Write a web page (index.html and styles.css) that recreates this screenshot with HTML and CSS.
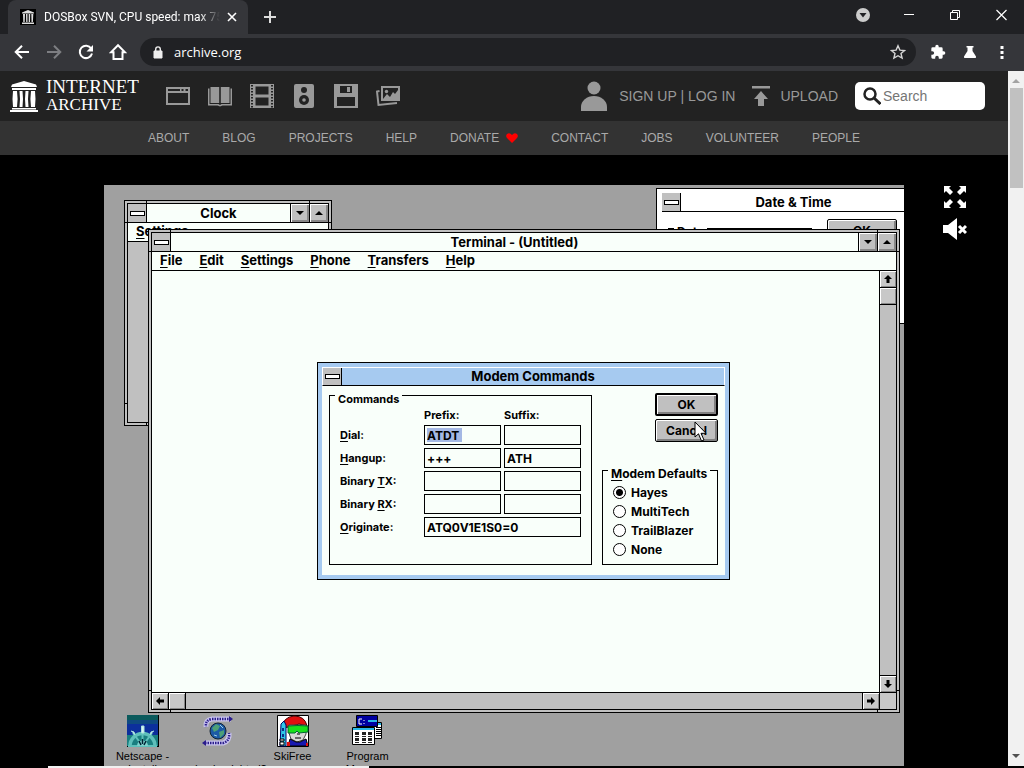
FILE: index.html
```
<!DOCTYPE html>
<html lang="en">

<head>
  <meta charset="utf-8">
  <title>DOSBox SVN, CPU speed: max 75% cycles</title>
  <link rel="stylesheet" href="styles.css">
</head>

<body>
  <div class="tabstrip">
    <div class="tab">
      <svg class="favicon" width="16" height="16" viewBox="0 0 16 16"><path fill="#000" d="M0 0h16v16H0z"/><path fill="#ddd" d="M8 1l6 2.500v1H2v-1zM3 5h2l-.3 8H3.300zM6 5h1.500v8H6.200zM8.700 5h1.500l-.2 8H8.700zM11.300 5h2l-.4 8h-1.400zM2 13.500h12V15H2z"/></svg>
      <span class="tab-title">DOSBox SVN, CPU speed: max 75%</span>
      <button class="tab-close" aria-label="Close tab"><svg width="10" height="10" viewBox="0 0 10 10"><path d="M1 1l8 8M9 1L1 9" stroke="#fff" stroke-width="1.600"/></svg></button>
    </div>
    <button class="new-tab" aria-label="New tab"><svg width="14" height="14" viewBox="0 0 14 14"><path d="M7 1v12M1 7h12" stroke="#ddd" stroke-width="2"/></svg></button>
    <div class="window-buttons">
      <button aria-label="Tab search"><svg width="14" height="14" viewBox="0 0 14 14"><circle cx="7" cy="7" r="7" fill="#ccc"/><path d="M3.500 5h7L7 9.500z" fill="#202124"/></svg></button>
      <button aria-label="Minimize"><svg width="10" height="14" viewBox="0 0 10 14"><path d="M0 6.500h10" stroke="#fff"/></svg></button>
      <button aria-label="Restore"><svg width="10" height="14" viewBox="0 0 10 14"><path d="M.5 4.500h7v7h-7zM2.500 4.500v-2h7v7h-2" stroke="#fff" fill="none"/></svg></button>
      <button aria-label="Close"><svg width="11" height="14" viewBox="0 0 11 14"><path d="M.5 2l10 10M10.500 2l-10 10" stroke="#fff" stroke-width="1.200"/></svg></button>
    </div>
  </div>

  <div class="toolbar">
    <button aria-label="Back"><svg width="16" height="16" viewBox="0 0 16 16"><path d="M15 8H2M8 1.700L1.700 8 8 14.300" stroke="#fff" stroke-width="2" fill="none"/></svg></button>
    <button aria-label="Forward"><svg width="16" height="16" viewBox="0 0 16 16"><path d="M1 8h13M8 1.700L14.300 8 8 14.300" stroke="#7d7e82" stroke-width="2" fill="none"/></svg></button>
    <button aria-label="Reload"><svg width="16" height="16" viewBox="0 0 16 16"><path d="M13.200 4.500A6.200 6.200 0 1 0 14 9.500" stroke="#fff" stroke-width="2" fill="none"/><path d="M15 1v6.500H8.500z" fill="#fff"/></svg></button>
    <button aria-label="Home"><svg width="18" height="18" viewBox="0 0 18 18"><path d="M9 2.200L2 9.300h2.500V16h9V9.300H16z" stroke="#fff" stroke-width="2" fill="none"/></svg></button>
    <div class="omnibox">
      <svg width="10" height="13" viewBox="0 0 10 13"><path d="M1 5h8v7H1z" fill="#eee" stroke="#eee"/><path d="M2.700 5V3.200a2.300 2.300 0 0 1 4.600 0V5" stroke="#eee" stroke-width="1.400" fill="none"/></svg>
      <input type="text" value="archive.org" aria-label="Address">
      <svg width="16" height="16" viewBox="0 0 16 16"><path d="M8 1.800l1.900 4.300 4.600.4L11 9.500l1.100 4.600L8 11.700l-4.100 2.400L5 9.500 1.500 6.500l4.600-.4z" stroke="#d5d5d5" stroke-width="1.400" fill="none"/></svg>
    </div>
    <button aria-label="Extensions"><svg width="16" height="16" viewBox="0 0 24 24"><path fill="#fff" d="M20.500 11H19V7a2 2 0 0 0-2-2h-4V3.500a2.500 2.500 0 0 0-5 0V5H4a2 2 0 0 0-2 2v3.800h1.500a2.700 2.700 0 0 1 0 5.400H2V20a2 2 0 0 0 2 2h3.800v-1.500a2.700 2.700 0 0 1 5.400 0V22H17a2 2 0 0 0 2-2v-4h1.500a2.500 2.500 0 0 0 0-5z"/></svg></button>
    <button aria-label="Experiments"><svg width="14" height="14" viewBox="0 0 14 14"><path fill="#fff" d="M3.500 1h7v1.500H9.500V6L13 11.500Q13.500 13 12 13H2Q.5 13 1 11.500L4.500 6V2.500h-1z"/></svg></button>
    <button aria-label="Menu"><svg width="4" height="14" viewBox="0 0 4 14"><path fill="#fff" d="M.5 1h3v3h-3zM.5 6h3v3h-3zM.5 11h3v3h-3z"/></svg></button>
  </div>

  <div class="viewport">
    <div class="page">
      <header class="topbar">
        <a href="#" class="logo">
          <svg width="28" height="32" viewBox="0 0 28 32"><path fill="#fff" d="M14 1l12 3.500 1 2.500H1l1-2.500zM2 8h24v2H2zM3 11h4l.6 8-.6 8H3l-.5-8zM9.500 11h3l.5 8-.5 8h-3l.5-8zM15.500 11h3l-.5 8 .5 8h-3l-.5-8zM21 11h4l.5 8-.5 8h-4l-.6-8zM2 28h24v1.500H2zM0 30h28v2H0z"/></svg>
          <span class="wordmark"><span>INTERNET</span><span class="second">ARCHIVE</span></span>
        </a>
        <nav class="media">
          <a href="#" aria-label="Web"><svg width="24" height="24" viewBox="0 0 24 24"><path fill="#999" fill-rule="evenodd" d="M0 3h24v18H0zM2 9v10h20V9zM2 5v2h12V5zM15.500 5v2h2V5zM19.500 5v2H22V5z"/></svg></a>
          <a href="#" aria-label="Texts"><svg width="24" height="24" viewBox="0 0 24 24"><path fill="#999" d="M2.500 3h8.700v16H2.500zM12.800 3h8.700v16h-8.700zM0 4.500h1.500V20h9l1.500 1 1.500-1h9V4.500H24v17h-9.500L12 22.500l-2.500-1H0z"/></svg></a>
          <a href="#" aria-label="Video"><svg width="24" height="24" viewBox="0 0 24 24"><path fill="#999" fill-rule="evenodd" d="M0 0h24v24H0zM5.500 2.500v8h13v-8zM5.500 13.500v8h13v-8z"/><path stroke="#222" stroke-width="2" stroke-dasharray="1.600 1.400" d="M2 1v23M22 1v23"/></svg></a>
          <a href="#" aria-label="Audio"><svg width="24" height="24" viewBox="0 0 24 24"><rect x="2" width="20" height="24" rx="2" fill="#999"/><circle cx="12" cy="6" r="3" fill="#222"/><circle cx="12" cy="16" r="5" fill="#222"/><circle cx="12" cy="16" r="1.800" fill="#999"/></svg></a>
          <a href="#" aria-label="Software"><svg width="24" height="24" viewBox="0 0 24 24"><path fill="#999" fill-rule="evenodd" d="M0 0h24v24H0zM6 2v7h12V2zM3 13v9h18v-9z"/><path fill="#999" d="M13 3h3v5h-3z"/></svg></a>
          <a href="#" aria-label="Images"><svg width="24" height="24" viewBox="0 0 24 24"><path fill="#999" fill-rule="evenodd" d="M5 2h19v15H5zM7 4v11l4-5 3 3 3-5 2 2 3-4V4z"/><circle cx="10.500" cy="7.500" r="1.700" fill="#999"/><path d="M3.500 7L1 7.500 2.500 21 21 19" stroke="#999" stroke-width="2" fill="none"/></svg></a>
        </nav>
        <div class="account">
          <svg width="26" height="32" viewBox="0 0 26 32"><circle cx="13" cy="8" r="6.500" fill="#999"/><path d="M0 31V27a13 11 0 0 1 26 0v4z" fill="#999"/></svg>
          <span><a href="#">SIGN UP</a> | <a href="#">LOG IN</a></span>
        </div>
        <a href="#" class="upload">
          <svg width="18" height="20" viewBox="0 0 18 20"><path fill="#999" d="M0 0h18v2.500H0zM9 5l7 8h-4v7H6v-7H2z"/></svg>
          UPLOAD
        </a>
        <label class="search">
          <svg width="18" height="18" viewBox="0 0 18 18"><circle cx="7" cy="7" r="5.500" stroke="#222" stroke-width="2.500" fill="none"/><path d="M11 11l6.500 6" stroke="#222" stroke-width="3"/></svg>
          <input type="search" placeholder="Search" aria-label="Search">
        </label>
      </header>

      <nav class="subnav">
        <a href="#">ABOUT</a>
        <a href="#">BLOG</a>
        <a href="#">PROJECTS</a>
        <a href="#">HELP</a>
        <a href="#">DONATE <svg width="12" height="10" viewBox="0 0 12 10"><path fill="#f00" d="M6 10L1 5Q-.5 3 .8 1.200 3.500-1 6 2q2.500-3 5.200-.8Q12.500 3 11 5z"/></svg></a>
        <a href="#">CONTACT</a>
        <a href="#">JOBS</a>
        <a href="#">VOLUNTEER</a>
        <a href="#">PEOPLE</a>
      </nav>

      <main class="stage">
        <div class="desktop">

          <section class="window clock">
            <div class="window-inner">
              <div class="titlebar">
                <button class="sysmenu" aria-label="Control menu"></button>
                <h2>Clock</h2>
                <button class="sizer" aria-label="Minimize"><svg width="8" height="4" viewBox="0 0 8 4"><path d="M0 0h8L4 4z"/></svg></button>
                <button class="sizer" aria-label="Maximize"><svg width="8" height="4" viewBox="0 0 8 4"><path d="M0 4h8L4 0z"/></svg></button>
              </div>
              <div class="menubar"><a href="#"><u>S</u>ettings</a></div>
              <div class="clock-face"></div>
            </div>
          </section>

          <section class="datetime">
            <div class="titlebar">
              <button class="sysmenu" aria-label="Control menu"></button>
              <h2>Date &amp; Time</h2>
            </div>
            <div class="datetime-body">
              <fieldset><legend>Date</legend></fieldset>
              <button class="push">OK</button>
            </div>
          </section>

          <section class="window terminal">
            <div class="window-inner">
              <div class="titlebar">
                <button class="sysmenu" aria-label="Control menu"></button>
                <h2>Terminal - (Untitled)</h2>
                <button class="sizer" aria-label="Minimize"><svg width="8" height="4" viewBox="0 0 8 4"><path d="M0 0h8L4 4z"/></svg></button>
                <button class="sizer" aria-label="Maximize"><svg width="8" height="4" viewBox="0 0 8 4"><path d="M0 4h8L4 0z"/></svg></button>
              </div>
              <div class="menubar">
                <a href="#"><u>F</u>ile</a>
                <a href="#"><u>E</u>dit</a>
                <a href="#"><u>S</u>ettings</a>
                <a href="#"><u>P</u>hone</a>
                <a href="#"><u>T</u>ransfers</a>
                <a href="#"><u>H</u>elp</a>
              </div>
              <div class="terminal-body">
                <div class="screen"></div>
                <div class="vscroll">
                  <button aria-label="Scroll up"><svg width="8" height="8" viewBox="0 0 8 8"><path d="M4 0l4 4H5.500v4h-3V4H0z"/></svg></button>
                  <div class="knob"></div>
                  <button class="last" aria-label="Scroll down"><svg width="8" height="8" viewBox="0 0 8 8"><path d="M4 8L0 4h2.500V0h3v4H8z"/></svg></button>
                </div>
                <div class="hscroll">
                  <button aria-label="Scroll left"><svg width="8" height="8" viewBox="0 0 8 8"><path d="M0 4l4-4v2.500h4v3H4V8z"/></svg></button>
                  <div class="knob"></div>
                  <button class="last" aria-label="Scroll right"><svg width="8" height="8" viewBox="0 0 8 8"><path d="M8 4L4 8V5.500H0v-3h4V0z"/></svg></button>
                </div>
                <div class="corner"></div>
              </div>
            </div>
          </section>

          <form class="dialog">
            <div class="titlebar">
              <button type="button" class="sysmenu" aria-label="Control menu"></button>
              <h2>Modem Commands</h2>
            </div>
            <div class="dialog-body">
              <fieldset class="commands">
                <legend>Commands</legend>
                <div class="fields">
                  <span></span><span>Prefix:</span><span>Suffix:</span>
                  <label for="dial"><u>D</u>ial:</label>
                  <input type="text" id="dial" class="selected" value="ATDT"><input type="text" aria-label="Dial suffix">
                  <label for="hangup"><u>H</u>angup:</label>
                  <input type="text" id="hangup" value="+++"><input type="text" aria-label="Hangup suffix" value="ATH">
                  <label for="tx">Binary <u>T</u>X:</label>
                  <input type="text" id="tx"><input type="text" aria-label="Binary TX suffix">
                  <label for="rx">Binary <u>R</u>X:</label>
                  <input type="text" id="rx"><input type="text" aria-label="Binary RX suffix">
                  <label for="originate"><u>O</u>riginate:</label>
                  <input type="text" id="originate" class="wide" value="ATQ0V1E1S0=0">
                </div>
              </fieldset>
              <div class="side">
                <button type="button" class="push default">OK</button>
                <button type="button" class="push">Cancel</button>
                <fieldset class="defaults">
                  <legend><u>M</u>odem Defaults</legend>
                  <label><input type="radio" name="modem" checked>Hayes</label>
                  <label><input type="radio" name="modem">MultiTech</label>
                  <label><input type="radio" name="modem">TrailBlazer</label>
                  <label><input type="radio" name="modem">None</label>
                </fieldset>
              </div>
            </div>
          </form>

          <svg class="pointer" width="13" height="21" viewBox="0 0 13 21"><path d="M1 1v15l3.500-3.200L7.500 20l2.500-1-3-6.700H12z" fill="#fff" stroke="#000"/></svg>

          <div class="icons">
            <figure>
              <svg width="32" height="32" viewBox="0 0 32 32"><path fill="#000" d="M0 0h32v32H0z"/><path fill="#0b5a5c" d="M0 0h31v8H0z"/><path fill="#0c2f9c" d="M0 7h31v13H0z"/><path fill="#0f4a80" d="M0 5h31v4H0z"/><path fill="#1a7f80" d="M0 20h31v11H0z"/><g stroke="#5fc0bb" stroke-width="3" fill="none"><path d="M3 31a12 12 0 0 1 25 0" stroke-width="3.500"/><path d="M15.500 31V12M15.500 31L6 18M15.500 31L25 18M15.500 31H1M15.500 31H30" stroke-width="2"/></g><path d="M14.500 11h2.500v7h-2.500zM4 16l3 1 1 3M27 16l-3 1-1 3" fill="#d9f4f2" stroke="#a9e2de"/><path d="M10 31a5.500 5.500 0 0 1 11 0z" fill="#7fd2cc"/><path d="M12 26l2 4M19 26l-2 4M15.500 24v5" stroke="#023" stroke-width="1.500"/></svg>
              <figcaption>Netscape -<br>Install</figcaption>
            </figure>
            <figure>
              <svg width="32" height="32" viewBox="0 0 32 32"><g fill="none" stroke="#c9c4ee" stroke-width="5"><path d="M29 4H10Q3 5 4 12M3 28h18q7-2 6-10"/></g><g fill="none" stroke="#2a1c8c" stroke-width="2.500" stroke-dasharray="1.500 1"><path d="M29 4H10Q3 5 4 12M3 28h18q7-2 6-10"/></g><path fill="#2a1c8c" d="M27 1l4 3-4 3zM4 25l-4 3 4 3z"/><circle cx="16" cy="16" r="8" fill="#1d5aa5" stroke="#123"/><path d="M10 13l4-4 4 2-2 4-4 2zM17 17l5-2v4l-4 4z" fill="#4da077"/><path d="M12 20l3 1M18 10l3 3" stroke="#9fd0e8"/></svg>
              <figcaption><br>wmodembook.html?</figcaption>
            </figure>
            <figure>
              <svg width="32" height="32" viewBox="0 0 32 32"><path fill="#fff" stroke="#000" d="M.5.500h31v31H.5z"/><path fill="#e01010" stroke="#400" d="M5 13Q6 2 17 1q11 0 13 10l-8-2-10 3z"/><path fill="#d8d8d8" stroke="#444" d="M12 10h17v9l-3 6-6 2-6-3-2-6z"/><path fill="#19e01c" stroke="#063" d="M11 11q10-1 20 0v6l-9 1-2-2-2 2h-7z"/><path fill="#30c8e8" stroke="#006" d="M4 9l3-3 2 4v21H3z"/><path d="M6 13v3M6 19v3" stroke="#006" stroke-width="1.500"/><path fill="#1818b0" stroke="#000" d="M11 31l2-7 6 3h4l6-3 2 7z"/><path d="M20 19h3M18 23h6" stroke="#444" stroke-width="1.500"/><path fill="#e01010" d="M10 27h3v4h-3zM29 28h2v3h-2z"/><path fill="#fff" stroke="#000" d="M3 24h4v2H3zM3 27h4v3H3z"/></svg>
              <figcaption>SkiFree</figcaption>
            </figure>
            <figure>
              <svg width="32" height="32" viewBox="0 0 32 32"><path fill="#fff" stroke="#000" d="M15.500 7.500h14v16h-14z"/><path fill="#28b8e8" d="M16 8h13v2H16z"/><path d="M24 12.500h5M24 14.500h5M24 16.500h5M24 18.500h5M24 20.500h5" stroke="#000"/><path fill="#0000a0" stroke="#000" d="M4.500.500h21v11h-21z"/><path fill="#28b8e8" d="M16 5h9v2h-9z"/><path d="M10 4H7v5h3M12 5v1M12 8v1" stroke="#fff" fill="none"/><path fill="#fff" stroke="#000" d="M.5 12.500h22v17H.5z"/><path fill="#28b8e8" d="M1 13h21v2H1z"/><path d="M3 18.500h4M10 18.500h4M16 18.500h4M3 24.500h4M10 24.500h4M16 24.500h4" stroke="#222" stroke-width="3"/><path d="M3 21.500h4M10 21.500h4M16 21.500h4M3 27.500h4M10 27.500h4M16 27.500h4" stroke="#222"/></svg>
              <figcaption>Program<br>Manager</figcaption>
            </figure>
          </div>
        </div>

        <div class="player-tools">
          <button aria-label="Fullscreen"><svg width="24" height="24" viewBox="0 0 24 24"><path fill="#fff" d="M1 1h7L6 3l4 4-3 3-4-4-2 2zM23 1h-7l2 2-4 4 3 3 4-4 2 2zM1 23h7l-2-2 4-4-3-3-4 4-2-2zM23 23h-7l2-2-4-4 3-3 4 4 2-2z"/></svg></button>
          <button aria-label="Mute"><svg width="24" height="24" viewBox="0 0 24 24"><path fill="#fff" d="M0 8h5l9-7v22l-9-7H0z"/><path d="M16 9l7 7M23 9l-7 7" stroke="#fff" stroke-width="3"/></svg></button>
        </div>
      </main>
    </div>

    <div class="scrollbar">
      <svg width="8" height="4" viewBox="0 0 8 4"><path fill="#a3a3a3" d="M0 4h8L4 0z"/></svg>
      <div class="thumb"></div>
      <svg width="8" height="4" viewBox="0 0 8 4"><path fill="#505050" d="M0 0h8L4 4z"/></svg>
    </div>
  </div>
  <div class="bottom-edge"><div></div></div>
</body>

</html>
```
FILE: styles.css
```
* {
  box-sizing: border-box;
}

body {
  margin: 0;
  height: 100vh;
  display: flex;
  flex-direction: column;
  overflow: hidden;
  background: #000;
  font-family: "Liberation Sans", Arial, sans-serif;
}

button {
  padding: 0;
  border: 0;
  background: none;
  font: inherit;
  display: flex;
  align-items: center;
  justify-content: center;
}

svg {
  flex: none;
  display: block;
}

a {
  color: inherit;
  text-decoration: none;
}

/* browser */
.tabstrip {
  height: 34px;
  flex: none;
  display: flex;
  padding-left: 8px;
  background: #202124;
}

.tab {
  width: 240px;
  display: flex;
  align-items: center;
  padding: 0 10px 0 12px;
  background: #35363a;
  border-radius: 8px 8px 0 0;
}

.tab-title {
  flex: 1;
  margin-left: 8px;
  overflow: hidden;
  white-space: nowrap;
  color: #fff;
  font-family: Roboto, sans-serif;
  font-size: 12px;
  -webkit-mask-image: linear-gradient(90deg, #000 88%, transparent);
  mask-image: linear-gradient(90deg, #000 88%, transparent);
}

.tab-close {
  margin-left: 6px;
  width: 12px;
}

.new-tab {
  width: 44px;
}

.window-buttons {
  display: flex;
  margin-left: auto;
  height: 30px;
}

.window-buttons button {
  width: 46px;
}

.toolbar {
  height: 37px;
  flex: none;
  display: flex;
  align-items: center;
  padding: 0 6px 1px;
  background: #35363a;
}

.toolbar button {
  width: 32px;
  height: 28px;
}

.omnibox {
  flex: 1;
  height: 28px;
  margin: 0 6px;
  padding: 0 10px 0 13px;
  display: flex;
  align-items: center;
  gap: 11px;
  border-radius: 14px;
  background: #202124;
}

.omnibox input {
  flex: 1;
  padding: 0;
  border: 0;
  outline: 0;
  background: none;
  color: #fff;
  font-family: "Open Sans", sans-serif;
  font-size: 13px;
}

.viewport {
  flex: 1;
  min-height: 0;
  display: flex;
}

.page {
  flex: 1;
  min-width: 0;
  display: flex;
  flex-direction: column;
}

.scrollbar {
  width: 16px;
  padding: 8px 0;
  display: flex;
  flex-direction: column;
  align-items: center;
  background: #f1f1f1;
}

.thumb {
  width: 13px;
  height: 100px;
  margin: 5px 0 auto;
  background: #c1c1c1;
}

.bottom-edge {
  height: 2px;
  flex: none;
  padding: 0 64% 0 48px;
}

.bottom-edge div {
  height: 2px;
  background: #f1f1f1;
}

/* archive.org header */
.topbar {
  height: 50px;
  flex: none;
  display: flex;
  align-items: center;
  padding: 0 23px 0 10px;
  background: #222;
  color: #999;
  font-size: 14px;
}

.logo {
  display: flex;
  align-items: center;
  gap: 8px;
  color: #fff;
  font-family: "Liberation Serif", serif;
}

.wordmark {
  display: flex;
  flex-direction: column;
  font-size: 19px;
  line-height: 18px;
}

.wordmark .second {
  font-size: 17px;
}

.media {
  display: flex;
  gap: 18px;
  margin-left: 27px;
}

.account {
  display: flex;
  align-items: center;
  gap: 12px;
  margin-left: auto;
}

.upload {
  display: flex;
  align-items: center;
  gap: 10px;
  margin: 0 17px;
}

.search {
  width: 130px;
  height: 28px;
  display: flex;
  align-items: center;
  gap: 2px;
  padding-left: 8px;
  border-radius: 5px;
  background: #fff;
}

.search input {
  flex: 1;
  min-width: 0;
  padding: 0;
  border: 0;
  outline: 0;
  background: none;
  font: 14px "Liberation Sans", Arial, sans-serif;
}

.subnav {
  height: 34px;
  flex: none;
  display: flex;
  align-items: center;
  justify-content: center;
  gap: 33px;
  background: #333;
  color: #aaa;
  font-size: 12px;
}

.subnav a {
  display: flex;
  align-items: center;
  gap: 7px;
}

/* emulator */
.stage {
  flex: 1;
  min-height: 0;
  display: grid;
  grid-template-columns: 1fr 800px 1fr;
  padding-top: 30px;
  background: #000;
}

.player-tools {
  grid-column: 3;
  padding-left: 39px;
  display: flex;
  flex-direction: column;
  align-items: flex-start;
  gap: 8px;
}

.desktop {
  grid-column: 2;
  position: relative;
  overflow: hidden;
  background: #a0a0a0;
  font-family: Inter, sans-serif;
  font-size: 12px;
  font-weight: 700;
  color: #000;
}

.desktop u {
  text-underline-offset: 2px;
}

.window {
  position: absolute;
  padding: 2px;
  border: 1px solid #000;
  background:
    linear-gradient(#000, #000) left 21px top 0 / 1px 100% no-repeat,
    linear-gradient(#000, #000) right 21px top 0 / 1px 100% no-repeat,
    linear-gradient(#000, #000) left 0 top 21px / 100% 1px no-repeat,
    linear-gradient(#000, #000) left 0 bottom 21px / 100% 1px no-repeat,
    #c0c0c0;
}

.window-inner {
  height: 100%;
  display: flex;
  flex-direction: column;
  border: 1px solid #000;
  background: #f9fffa;
}

.clock {
  left: 20px;
  top: 15px;
  width: 208px;
  height: 226px;
}

.clock-face {
  flex: 1;
  background: #c0c0c0;
}

.terminal {
  left: 44px;
  top: 44px;
  width: 752px;
  height: 484px;
}

.titlebar {
  flex: none;
  height: 19px;
  display: flex;
  border-bottom: 1px solid #000;
}

.titlebar h2 {
  flex: 1;
  margin: 0;
  text-align: center;
  font-size: 13px;
  line-height: 18px;
}

.sysmenu {
  width: 19px;
  border-right: 1px solid #000;
  background: #c0c0c0;
}

.sysmenu::before {
  content: "";
  width: 13px;
  height: 3px;
  border: 1px solid #000;
  background: #fff;
}

.sizer {
  width: 19px;
  border-left: 1px solid #000;
  background: #c0c0c0;
  box-shadow: inset 1px 1px #fff, inset -2px -2px #888;
}

.menubar {
  flex: none;
  height: 19px;
  display: flex;
  gap: 17px;
  padding-left: 8px;
  border-bottom: 1px solid #000;
  font-size: 13px;
  line-height: 16px;
}

.terminal-body {
  flex: 1;
  display: grid;
  grid-template: 1fr 17px / 1fr 17px;
}

.vscroll,
.hscroll {
  display: flex;
  background: #c0c0c0;
}

.vscroll {
  flex-direction: column;
  border-left: 1px solid #000;
}

.hscroll {
  border-top: 1px solid #000;
}

.vscroll > *,
.hscroll > * {
  width: 16px;
  height: 16px;
  background: #c8c8c8;
  box-shadow: inset 1px 1px #fff, inset -1px -1px #888;
}

.vscroll > * {
  height: 17px;
  border-bottom: 1px solid #000;
}

.hscroll > * {
  width: 17px;
  border-right: 1px solid #000;
}

.vscroll .last {
  margin-top: auto;
  border: 0;
  border-top: 1px solid #000;
}

.hscroll .last {
  margin-left: auto;
  border: 0;
  border-left: 1px solid #000;
}

.corner {
  border: 1px solid #000;
  border-width: 1px 0 0 1px;
  background: #c8c8c8;
}

.datetime {
  position: absolute;
  left: 552px;
  top: 3px;
  width: 256px;
  height: 136px;
  padding: 4px 5px;
  border: 1px solid #000;
  background: #fff;
}

.datetime-body {
  display: flex;
  gap: 15px;
  padding: 7px 6px;
}

.datetime fieldset {
  width: 144px;
  height: 60px;
}

.datetime .push {
  width: 70px;
}

fieldset {
  margin: 0;
  min-width: 0;
  padding: 0 10px;
  border: 1px solid #000;
}

legend {
  margin-left: -5px;
  padding: 8px 3px 0;
  line-height: 10px;
  white-space: nowrap;
}

.push {
  width: 63px;
  height: 23px;
  border: 1px solid #000;
  border-radius: 2px;
  background: #c0c0c0;
  box-shadow: inset 1px 1px #fff, inset -2px -2px #808080;
}

.push.default {
  border-width: 2px;
}

.dialog {
  position: absolute;
  left: 213px;
  top: 177px;
  width: 413px;
  height: 218px;
  display: flex;
  flex-direction: column;
  padding: 4px;
  border: 1px solid #000;
  background: #a6caf0;
}

.dialog .titlebar {
  border-left: 1px solid #fff;
  border-top: 1px solid #fff;
  border-right: 1px solid #fff;
}

.dialog .titlebar h2 {
  line-height: 17px;
}

.dialog-body {
  flex: 1;
  display: flex;
  gap: 10px;
  padding: 0 7px 10px;
  background: #f9fffa;
}

.commands {
  flex: 1;
  font-size: 11px;
}

.fields {
  display: grid;
  grid-template-columns: 81px 77px 77px;
  grid-auto-rows: 20px;
  grid-template-rows: 15px;
  gap: 3px;
  padding-top: 3px;
  align-items: center;
}

.fields input {
  width: 100%;
  height: 20px;
  padding: 0 2px;
  border: 1px solid #000;
  border-radius: 0;
  outline: 0;
  background: #f9fffa;
  font: 700 12px Inter, sans-serif;
  color: #000;
}

.fields .wide {
  grid-column: span 2;
}

.fields .selected {
  background: linear-gradient(#a4b8e4, #a4b8e4) 2px 2px / 35px 14px no-repeat #f9fffa;
}

.side {
  width: 116px;
  display: flex;
  flex-direction: column;
  align-items: flex-end;
  gap: 3px;
  padding-top: 7px;
}

.defaults {
  width: 100%;
  height: 104px;
  margin-top: auto;
}

.defaults legend + label {
  margin-top: 4px;
}

.defaults label {
  display: flex;
  align-items: center;
  gap: 5px;
  height: 19px;
}

.defaults input {
  appearance: none;
  width: 13px;
  height: 13px;
  margin: 0;
  border: 1px solid #000;
  border-radius: 50%;
  background: #fff;
}

.defaults input:checked {
  background: radial-gradient(#000 3px, #fff 4px);
}

.pointer {
  position: absolute;
  left: 590px;
  top: 236px;
}

.icons {
  position: absolute;
  left: 1px;
  top: 530px;
  display: flex;
  font-family: "Liberation Sans", Arial, sans-serif;
  font-size: 11px;
  font-weight: 400;
  line-height: 13px;
}

.icons figure {
  width: 75px;
  margin: 0;
  display: flex;
  flex-direction: column;
  align-items: center;
  gap: 3px;
  text-align: center;
}
```
